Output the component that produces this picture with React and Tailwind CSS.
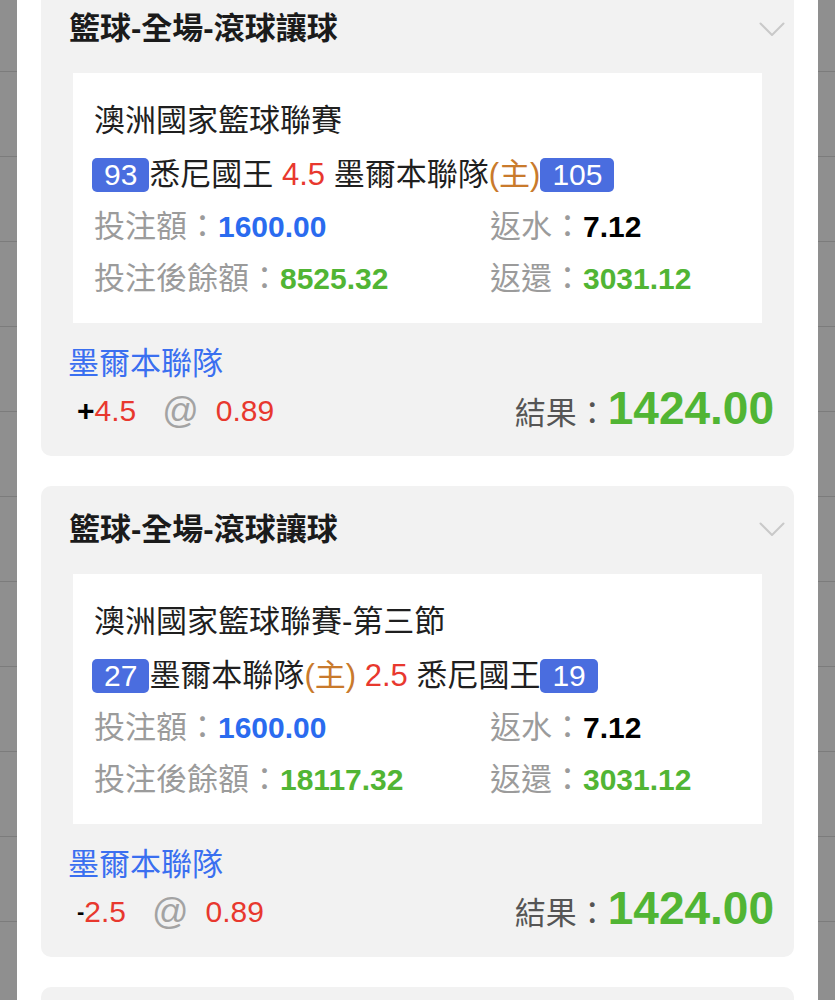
import React from 'react';

const bets = [
  {
    market: '籃球-全場-滾球讓球',
    league: '澳洲國家籃球聯賽',
    left: { score: 93, name: '悉尼國王' },
    line: '4.5',
    right: { score: 105, name: '墨爾本聯隊', home: true },
    stake: '1600.00',
    rebate: '7.12',
    balance: '8525.32',
    returned: '3031.12',
    pick: '墨爾本聯隊',
    sign: '+',
    handicap: '4.5',
    odds: '0.89',
    result: '1424.00',
  },
  {
    market: '籃球-全場-滾球讓球',
    league: '澳洲國家籃球聯賽-第三節',
    left: { score: 27, name: '墨爾本聯隊', home: true },
    line: '2.5',
    right: { score: 19, name: '悉尼國王' },
    stake: '1600.00',
    rebate: '7.12',
    balance: '18117.32',
    returned: '3031.12',
    pick: '墨爾本聯隊',
    sign: '-',
    handicap: '2.5',
    odds: '0.89',
    result: '1424.00',
  },
];

function Chevron() {
  return (
    <svg width="26" height="15" viewBox="0 0 26 15" fill="none">
      <polyline points="1.5,1.5 13,13 24.5,1.5" stroke="#c9c9c9" strokeWidth="2" strokeLinecap="round" strokeLinejoin="round" />
    </svg>
  );
}

function Badge({ children }) {
  return (
    <span className="inline-block h-[34px] rounded-[5px] bg-[#4a6ddf] px-[12px] align-middle text-[30px] leading-[34px] text-white">
      {children}
    </span>
  );
}

function TeamName({ team }) {
  return (
    <>
      <span className="align-middle">{team.name}</span>
      {team.home && <span className="align-middle text-[#c97a2c]">(主)</span>}
    </>
  );
}

function Sidebar() {
  return (
    <div className="flex w-[17px] shrink-0 flex-col bg-[#8f8f8f]">
      <div className="h-[71px] shrink-0" />
      {[...Array(12)].map((_, i) => (
        <div key={i} className="h-[85px] shrink-0 border-t border-[#7c7c7c]" />
      ))}
    </div>
  );
}

function BetCard({ bet }) {
  return (
    <div className="rounded-[10px] bg-[#f2f2f2]">
      <div className="flex h-[88px] items-center justify-between pl-[28px] pr-[9px]">
        <h2 className="text-[31px] font-bold text-[#1b1b1b]">{bet.market}</h2>
        <Chevron />
      </div>

      <div className="mx-[32px] bg-white pb-[18px] pl-[21px] pt-[22px] text-[31px] leading-[52px]">
        <div className="text-[#1f1f1f]">{bet.league}</div>
        <div className="-ml-[2px] whitespace-nowrap text-[#1f1f1f]">
          <Badge>{bet.left.score}</Badge>
          <TeamName team={bet.left} />
          <span className="align-middle text-[#e8382e]"> {bet.line} </span>
          <TeamName team={bet.right} />
          <Badge>{bet.right.score}</Badge>
        </div>
        <div className="grid grid-cols-[396px_1fr] text-[#9b9b9b]">
          <div>
            投注額：<span className="text-[30px] font-bold text-[#2a6bef]">{bet.stake}</span>
          </div>
          <div>
            返水：<span className="text-[30px] font-bold text-black">{bet.rebate}</span>
          </div>
          <div>
            投注後餘額：<span className="text-[30px] font-bold text-[#51b534]">{bet.balance}</span>
          </div>
          <div>
            返還：<span className="text-[30px] font-bold text-[#51b534]">{bet.returned}</span>
          </div>
        </div>
      </div>

      <div className="pl-[27px] pt-[21px] text-[31px] leading-[40px] text-[#3a6ff0]">{bet.pick}</div>
      <div className="flex h-[54px] items-center justify-between pl-[36px] pr-[20px]">
        <div className="flex items-center text-[30px]">
          <span className={bet.sign === '+' ? 'font-bold text-black' : 'text-[22px] font-bold text-black'}>
            {bet.sign}
          </span>
          <span className="text-[#e8382e]">{bet.handicap}</span>
          <span className="ml-[26px] mr-[17px] text-[36px] text-[#a3a3a3]">@</span>
          <span className="text-[#e8382e]">{bet.odds}</span>
        </div>
        <div className="flex items-baseline">
          <span className="text-[31px] text-[#555555]">結果：</span>
          <span className="text-[46px] font-bold leading-none text-[#51b534]">{bet.result}</span>
        </div>
      </div>
      <div className="h-[18px]" />
    </div>
  );
}

export default function App() {
  return (
    <div
      className="flex h-[1000px] w-[835px] overflow-hidden bg-white"
      style={{ fontFamily: '"Liberation Sans", "Noto Sans CJK TC", sans-serif' }}
    >
      <Sidebar />
      <div className="min-w-0 flex-1 px-[24px]">
        <div className="-mt-[15px] flex flex-col gap-[30px]">
          {bets.map((bet, i) => (
            <BetCard key={i} bet={bet} />
          ))}
          <div className="h-[60px] rounded-[10px] bg-[#f2f2f2]" />
        </div>
      </div>
      <Sidebar />
    </div>
  );
}
